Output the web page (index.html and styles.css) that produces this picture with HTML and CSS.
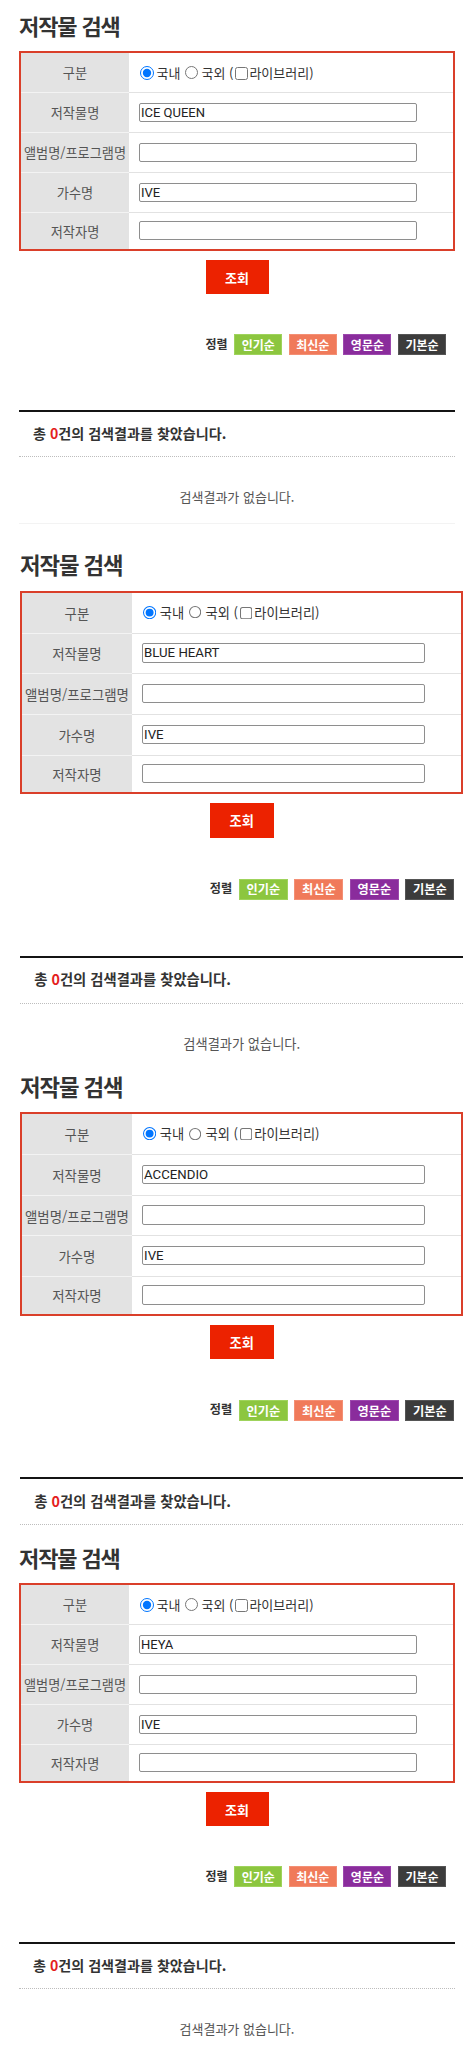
FILE: index.html
```html
<!DOCTYPE html>
<html lang="ko">
<head>
<meta charset="utf-8">
<title>저작물 검색</title>
<link rel="stylesheet" href="styles.css">
</head>
<body>

<section class="sec sec--first">
  <h2 class="sec-title">저작물 검색</h2>
  <div class="form-table">
    <div class="row"><div class="lbl">구분</div><div class="val val--opts"><input type="radio" class="radio" name="g1" checked><span>국내</span><input type="radio" class="radio radio--2" name="g1"><span>국외 (</span><input type="checkbox" class="chk"><span>라이브러리)</span></div></div>
    <div class="row"><div class="lbl">저작물명</div><div class="val"><input type="text" class="field" value="ICE QUEEN"></div></div>
    <div class="row"><div class="lbl">앨범명/프로그램명</div><div class="val"><input type="text" class="field" value=""></div></div>
    <div class="row"><div class="lbl">가수명</div><div class="val"><input type="text" class="field" value="IVE"></div></div>
    <div class="row row--last"><div class="lbl">저작자명</div><div class="val"><input type="text" class="field" value=""></div></div>
  </div>
  <div class="btn-row"><button type="button" class="btn-search">조회</button></div>
  <div class="sort"><span class="sort-label">정렬</span><a class="sort-btn sort-btn--green">인기순</a><a class="sort-btn sort-btn--salmon">최신순</a><a class="sort-btn sort-btn--purple">영문순</a><a class="sort-btn sort-btn--dark">기본순</a></div>
  <div class="result-head">총 <em class="count">0</em>건의 검색결과를 찾았습니다.</div>
  <p class="no-result">검색결과가 없습니다.</p>
</section>

<section class="sec sec--wide sec--second">
  <h2 class="sec-title">저작물 검색</h2>
  <div class="form-table">
    <div class="row"><div class="lbl">구분</div><div class="val val--opts"><input type="radio" class="radio" name="g2" checked><span>국내</span><input type="radio" class="radio radio--2" name="g2"><span>국외 (</span><input type="checkbox" class="chk"><span>라이브러리)</span></div></div>
    <div class="row"><div class="lbl">저작물명</div><div class="val"><input type="text" class="field" value="BLUE HEART"></div></div>
    <div class="row"><div class="lbl">앨범명/프로그램명</div><div class="val"><input type="text" class="field" value=""></div></div>
    <div class="row"><div class="lbl">가수명</div><div class="val"><input type="text" class="field" value="IVE"></div></div>
    <div class="row row--last"><div class="lbl">저작자명</div><div class="val"><input type="text" class="field" value=""></div></div>
  </div>
  <div class="btn-row"><button type="button" class="btn-search">조회</button></div>
  <div class="sort"><span class="sort-label">정렬</span><a class="sort-btn sort-btn--green">인기순</a><a class="sort-btn sort-btn--salmon">최신순</a><a class="sort-btn sort-btn--purple">영문순</a><a class="sort-btn sort-btn--dark">기본순</a></div>
  <div class="result-head">총 <em class="count">0</em>건의 검색결과를 찾았습니다.</div>
  <p class="no-result">검색결과가 없습니다.</p>
</section>

<section class="sec sec--wide sec--third">
  <h2 class="sec-title">저작물 검색</h2>
  <div class="form-table">
    <div class="row"><div class="lbl">구분</div><div class="val val--opts"><input type="radio" class="radio" name="g3" checked><span>국내</span><input type="radio" class="radio radio--2" name="g3"><span>국외 (</span><input type="checkbox" class="chk"><span>라이브러리)</span></div></div>
    <div class="row"><div class="lbl">저작물명</div><div class="val"><input type="text" class="field" value="ACCENDIO"></div></div>
    <div class="row"><div class="lbl">앨범명/프로그램명</div><div class="val"><input type="text" class="field" value=""></div></div>
    <div class="row"><div class="lbl">가수명</div><div class="val"><input type="text" class="field" value="IVE"></div></div>
    <div class="row row--last"><div class="lbl">저작자명</div><div class="val"><input type="text" class="field" value=""></div></div>
  </div>
  <div class="btn-row"><button type="button" class="btn-search">조회</button></div>
  <div class="sort"><span class="sort-label">정렬</span><a class="sort-btn sort-btn--green">인기순</a><a class="sort-btn sort-btn--salmon">최신순</a><a class="sort-btn sort-btn--purple">영문순</a><a class="sort-btn sort-btn--dark">기본순</a></div>
  <div class="result-head">총 <em class="count">0</em>건의 검색결과를 찾았습니다.</div>
</section>

<section class="sec sec--fourth">
  <h2 class="sec-title">저작물 검색</h2>
  <div class="form-table">
    <div class="row"><div class="lbl">구분</div><div class="val val--opts"><input type="radio" class="radio" name="g4" checked><span>국내</span><input type="radio" class="radio radio--2" name="g4"><span>국외 (</span><input type="checkbox" class="chk"><span>라이브러리)</span></div></div>
    <div class="row"><div class="lbl">저작물명</div><div class="val"><input type="text" class="field" value="HEYA"></div></div>
    <div class="row"><div class="lbl">앨범명/프로그램명</div><div class="val"><input type="text" class="field" value=""></div></div>
    <div class="row"><div class="lbl">가수명</div><div class="val"><input type="text" class="field" value="IVE"></div></div>
    <div class="row row--last"><div class="lbl">저작자명</div><div class="val"><input type="text" class="field" value=""></div></div>
  </div>
  <div class="btn-row"><button type="button" class="btn-search">조회</button></div>
  <div class="sort"><span class="sort-label">정렬</span><a class="sort-btn sort-btn--green">인기순</a><a class="sort-btn sort-btn--salmon">최신순</a><a class="sort-btn sort-btn--purple">영문순</a><a class="sort-btn sort-btn--dark">기본순</a></div>
  <div class="result-head">총 <em class="count">0</em>건의 검색결과를 찾았습니다.</div>
  <p class="no-result">검색결과가 없습니다.</p>
</section>

</body>
</html>
```
FILE: styles.css
```css
* { box-sizing: border-box; }

html, body {
  margin: 0;
  padding: 0;
  background: #fff;
}

body {
  font-family: "Noto Sans CJK KR", "Noto Sans", sans-serif;
  color: #333;
}

.sec {
  display: flex;
  flex-direction: column;
  padding: 10px 19px 0 19px;
}

.sec > * {
  width: 436px;
  flex-shrink: 0;
}

.sec--wide {
  zoom: 1.017;
  padding-left: 19.7px;
}

.sec--first {
  margin-bottom: 15px;
}

.sec--third {
  padding-bottom: 7px;
}

.sec-title {
  margin: 0;
  font-size: 22px;
  line-height: 30px;
  font-weight: 700;
  color: #333;
  letter-spacing: -1.1px;
}

/* form table */
.form-table {
  margin-top: 11px;
  border: 2px solid #da3f2a;
  display: flex;
  flex-direction: column;
  height: 200px;
}

.row {
  display: flex;
  height: 40px;
}

.row--last {
  height: 36px;
}

.lbl {
  width: 108px;
  flex-shrink: 0;
  background: #e3e3e3;
  border-bottom: 1px solid #f3f3f3;
  display: flex;
  align-items: center;
  justify-content: center;
  font-size: 13.2px;
  color: #555;
  white-space: nowrap;
}

.val {
  flex: 1;
  border-bottom: 1px solid #e2e2e2;
  display: flex;
  align-items: center;
  padding-left: 10px;
  font-size: 13px;
  color: #333;
}

.row--last .lbl,
.row--last .val {
  border-bottom: 0;
}

.val--opts {
  padding-left: 10.5px;
}

.radio {
  width: 14px;
  height: 14px;
  margin: 0 3px 0 0;
  flex-shrink: 0;
}

.radio--2 {
  margin-left: 5px;
  width: 13px;
  height: 13px;
}

.chk {
  width: 13px;
  height: 13px;
  margin: 1px 1px 0 2px;
  flex-shrink: 0;
}

.val--opts span {
  white-space: pre;
  line-height: 16px;
}

.field {
  width: 278px;
  height: 19px;
  border: 1px solid #8e8e8e;
  border-radius: 2px;
  padding: 0 1px;
  margin: 0 0 1px 0;
  font-family: Roboto, "Noto Sans CJK KR", sans-serif;
  font-size: 13px;
  color: #222;
  background: #fff;
}

/* search button */
.btn-row {
  display: flex;
  justify-content: center;
  margin-top: 9px;
}

.btn-search {
  width: 63px;
  height: 34px;
  border: 0;
  border-radius: 0;
  background: #ec2200;
  color: #fff;
  font-family: "Noto Sans CJK KR", sans-serif;
  font-size: 13px;
  font-weight: 700;
  padding: 0;
}

/* sort */
.sort {
  margin-top: 40px;
  display: flex;
  justify-content: flex-end;
  align-items: center;
  gap: 6.6px;
  padding-right: 9px;
  height: 21px;
}

.sort-label {
  font-size: 12px;
  font-weight: 700;
  color: #333;
  margin-top: -3px;
}

.sort-btn {
  width: 48px;
  height: 21px;
  display: flex;
  align-items: center;
  justify-content: center;
  font-size: 12px;
  font-weight: 700;
  color: #fff;
  text-decoration: none;
  border: 1px solid transparent;
}

.sort-btn--green { background: #8cc63f; border-color: #9fd35c; }
.sort-btn--salmon { background: #f07a5a; border-color: #f48f74; }
.sort-btn--purple { background: #8a2c9c; border-color: #9c48ad; }
.sort-btn--dark { background: #3c3c3c; border-color: #555; }

/* result header */
.result-head {
  margin-top: 55px;
  border-top: 2px solid #141414;
  border-bottom: 1px dotted #bdbdbd;
  padding: 11px 0 13px 14px;
  font-size: 14.1px;
  line-height: 20px;
  font-weight: 700;
  color: #333;
}

.count {
  font-style: normal;
  color: #e41e1e;
}

.no-result {
  margin: 0;
  padding: 32px 0 18px;
  text-align: center;
  font-size: 13px;
  line-height: 16px;
  color: #555;
}

.sec--first .no-result {
  border-bottom: 1px solid #f3f3f3;
}

.sec--second .no-result {
  padding-bottom: 8px;
}
```
